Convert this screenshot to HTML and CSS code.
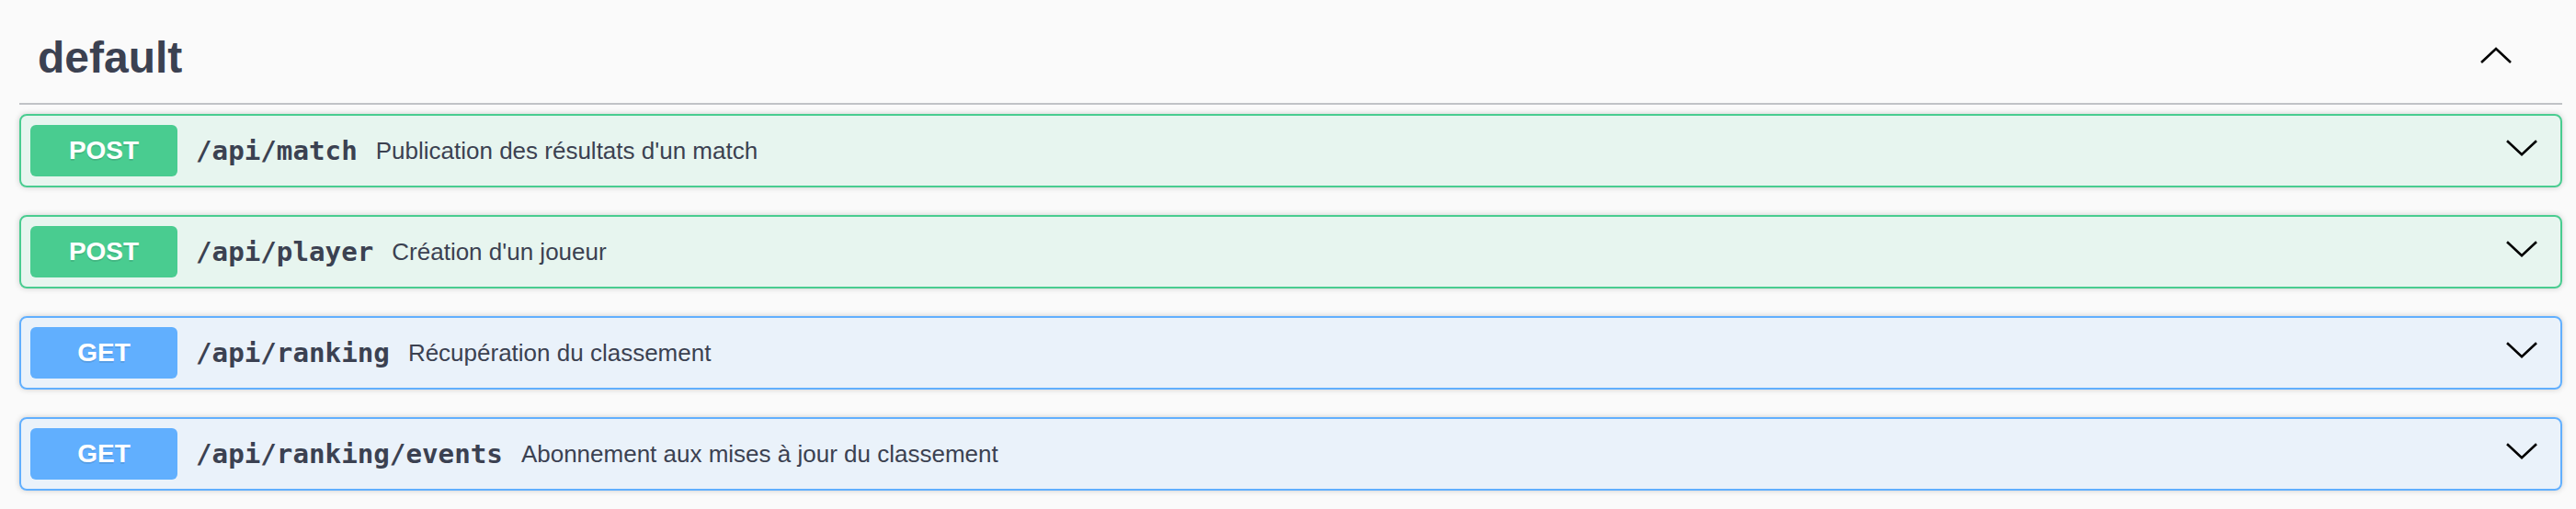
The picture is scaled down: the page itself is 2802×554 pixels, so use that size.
FILE: index.html
```html
<!DOCTYPE html>
<html lang="fr">
<head>
<meta charset="utf-8">
<title>default</title>
<link rel="stylesheet" href="styles.css">
</head>
<body>
<div class="wrapper">
  <section class="tag-section">
    <div class="tag-header">
      <h3 class="tag-title">default</h3>
      <span class="toggle">
        <svg class="arrow" width="40" height="40" viewBox="0 0 40 40"><polyline points="4,25 20,10 36,25"/></svg>
      </span>
    </div>
    <div class="opblock post">
      <div class="summary">
        <span class="method">POST</span>
        <span class="path">/api/match</span>
        <span class="desc">Publication des résultats d'un match</span>
        <span class="toggle">
          <svg class="arrow" width="40" height="40" viewBox="0 0 40 40"><polyline points="4,9.2 20,24.2 36,9.2"/></svg>
        </span>
      </div>
    </div>
    <div class="opblock post">
      <div class="summary">
        <span class="method">POST</span>
        <span class="path">/api/player</span>
        <span class="desc">Création d'un joueur</span>
        <span class="toggle">
          <svg class="arrow" width="40" height="40" viewBox="0 0 40 40"><polyline points="4,9.2 20,24.2 36,9.2"/></svg>
        </span>
      </div>
    </div>
    <div class="opblock get">
      <div class="summary">
        <span class="method">GET</span>
        <span class="path">/api/ranking</span>
        <span class="desc">Récupération du classement</span>
        <span class="toggle">
          <svg class="arrow" width="40" height="40" viewBox="0 0 40 40"><polyline points="4,9.2 20,24.2 36,9.2"/></svg>
        </span>
      </div>
    </div>
    <div class="opblock get">
      <div class="summary">
        <span class="method">GET</span>
        <span class="path">/api/ranking/events</span>
        <span class="desc">Abonnement aux mises à jour du classement</span>
        <span class="toggle">
          <svg class="arrow" width="40" height="40" viewBox="0 0 40 40"><polyline points="4,9.2 20,24.2 36,9.2"/></svg>
        </span>
      </div>
    </div>
  </section>
</div>
</body>
</html>
```
FILE: styles.css
```css
html, body {
  margin: 0;
  padding: 0;
  background: #fafafa;
  color: #3b4151;
  font-family: "Liberation Sans", Arial, sans-serif;
}

.wrapper {
  padding: 15px 15px 0 21px;
}

.tag-header {
  display: flex;
  align-items: center;
  padding: 20px 40px 21px 20px;
  border-bottom: 2px solid rgba(59, 65, 81, 0.3);
  margin-bottom: 10px;
}

.tag-title {
  flex: 1 1 auto;
  margin: 0;
  font-size: 48px;
  line-height: 56px;
  font-weight: bold;
  color: #3b4151;
}

.toggle {
  display: flex;
  align-items: center;
  padding-right: 12px;
}

.arrow {
  display: block;
}

.arrow polyline {
  fill: none;
  stroke: #000;
  stroke-width: 2.6;
  stroke-linejoin: miter;
  stroke-linecap: butt;
}

.opblock {
  border: 2px solid;
  border-radius: 8px;
  box-shadow: 0 0 6px rgba(0, 0, 0, 0.19);
  margin-bottom: 30px;
}

.opblock.post {
  border-color: #49cc90;
  background: rgba(73, 204, 144, 0.1);
}

.opblock.get {
  border-color: #61affe;
  background: rgba(97, 175, 254, 0.1);
}

.summary {
  display: flex;
  align-items: center;
  padding: 10px;
}

.method {
  min-width: 160px;
  padding: 12px 0;
  border-radius: 6px;
  color: #fff;
  font-size: 28px;
  font-weight: bold;
  text-align: center;
  text-shadow: 0 2px 0 rgba(0, 0, 0, 0.1);
}

.post .method {
  background: #49cc90;
}

.get .method {
  background: #61affe;
}

.path {
  padding: 0 20px;
  font-family: "DejaVu Sans Mono", "Liberation Mono", monospace;
  font-size: 29.2px;
  font-weight: bold;
  color: #3b4151;
}

.desc {
  flex: 1 1 auto;
  font-size: 26px;
  color: #3b4151;
}
```
